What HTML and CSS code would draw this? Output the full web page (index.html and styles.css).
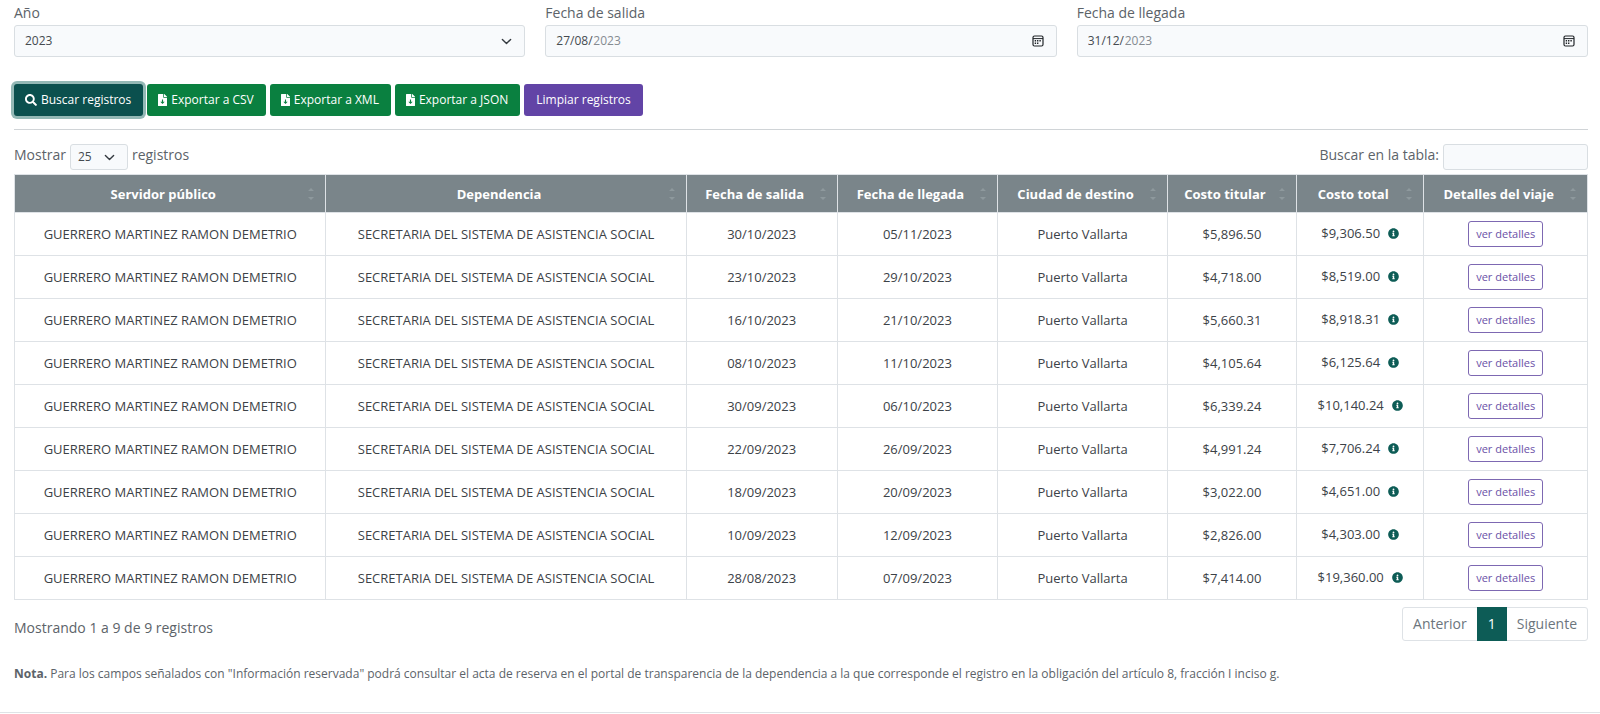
FILE: index.html
```html
<!DOCTYPE html>
<html lang="es">
<head>
<meta charset="utf-8">
<title>Registros de viajes</title>
<link rel="stylesheet" href="styles.css">
</head>
<body>
<svg class="sprite" aria-hidden="true">
  <symbol id="i-search" viewBox="0 0 512 512"><path fill="currentColor" d="M505 442.700L405.300 343c-4.500-4.500-10.600-7-17-7H372c27.600-35.300 44-79.700 44-128C416 93.100 322.900 0 208 0S0 93.100 0 208s93.100 208 208 208c48.300 0 92.700-16.400 128-44v16.300c0 6.400 2.500 12.500 7 17l99.700 99.700c9.400 9.400 24.600 9.400 33.900 0l28.300-28.300c9.400-9.400 9.400-24.600.1-34zM208 336c-70.700 0-128-57.200-128-128 0-70.700 57.200-128 128-128 70.700 0 128 57.200 128 128 0 70.700-57.200 128-128 128z"/></symbol>
  <symbol id="i-file" viewBox="0 0 384 512"><path fill="currentColor" fill-rule="evenodd" d="M224 136V0H24C10.700 0 0 10.700 0 24v464c0 13.300 10.700 24 24 24h336c13.300 0 24-10.700 24-24V160H248c-13.200 0-24-10.800-24-24zM168 230h48v100h70L192 430 98 330h70zM377 105L279.100 7c-4.500-4.500-10.600-7-17-7H256v128h128v-6.100c0-6.300-2.500-12.400-7-16.900z"/></symbol>
  <symbol id="i-info" viewBox="0 0 512 512"><path fill="currentColor" d="M256 8C119 8 8 119.100 8 256c0 137 111 248 248 248s248-111 248-248C504 119.100 393 8 256 8zm0 110c23.200 0 42 18.800 42 42s-18.800 42-42 42-42-18.800-42-42 18.800-42 42-42zm56 254c0 6.600-5.400 12-12 12h-88c-6.600 0-12-5.400-12-12v-24c0-6.600 5.400-12 12-12h12v-64h-12c-6.600 0-12-5.400-12-12v-24c0-6.600 5.400-12 12-12h64c6.600 0 12 5.400 12 12v100h12c6.600 0 12 5.400 12 12v24z"/></symbol>
  <symbol id="i-cal" viewBox="0 0 12 12"><rect x="1" y="1" width="10" height="10" rx="1.500" fill="none" stroke="currentColor" stroke-width="1.200"/><path d="M1 3.600h10" stroke="currentColor" stroke-width="1"/><path fill="currentColor" d="M5 5h1.400v1.400H5zM7.400 5h1.400v1.400H7.400zM2.700 5h1.400v1.400H2.700zM2.700 7.500h1.400v1.400H2.700zM5 7.500h1.400v1.400H5z"/></symbol>
  <symbol id="i-sort" viewBox="0 0 6 12"><path fill="currentColor" d="M3 0l3 3H0zM3 12l3-3H0z"/></symbol>
</svg>
<main class="card">
  <form class="filters">
    <div class="field">
      <label for="anio">Año</label>
      <select id="anio" class="control select"><option>2023</option></select>
    </div>
    <div class="field">
      <label for="salida">Fecha de salida</label>
      <div class="control date">
        <input id="salida" class="day" type="text" value="27/08/"><input class="year" type="text" value="2023" aria-label="Año de salida">
        <button type="button" class="cal" aria-label="Abrir calendario"><svg><use href="#i-cal"/></svg></button>
      </div>
    </div>
    <div class="field">
      <label for="llegada">Fecha de llegada</label>
      <div class="control date">
        <input id="llegada" class="day" type="text" value="31/12/"><input class="year" type="text" value="2023" aria-label="Año de llegada">
        <button type="button" class="cal" aria-label="Abrir calendario"><svg><use href="#i-cal"/></svg></button>
      </div>
    </div>
  </form>
  <div class="actions">
    <button class="btn search" type="button"><svg class="icon-search"><use href="#i-search"/></svg>Buscar registros</button>
    <button class="btn export" type="button"><svg class="icon-file"><use href="#i-file"/></svg>Exportar a CSV</button>
    <button class="btn export" type="button"><svg class="icon-file"><use href="#i-file"/></svg>Exportar a XML</button>
    <button class="btn export" type="button"><svg class="icon-file"><use href="#i-file"/></svg>Exportar a JSON</button>
    <button class="btn clear" type="button">Limpiar registros</button>
  </div>
  <div class="toolbar">
    <label class="length">Mostrar <select class="control small select"><option>25</option></select> registros</label>
    <label class="find">Buscar en la tabla: <input class="control small" type="search"></label>
  </div>
  <table class="records">
    <colgroup><col class="c-name"><col class="c-dep"><col class="c-out"><col class="c-in"><col class="c-city"><col class="c-cost"><col class="c-total"><col class="c-more"></colgroup>
    <thead>
      <tr>
        <th>Servidor público<svg class="sort"><use href="#i-sort"/></svg></th>
        <th>Dependencia<svg class="sort"><use href="#i-sort"/></svg></th>
        <th>Fecha de salida<svg class="sort"><use href="#i-sort"/></svg></th>
        <th>Fecha de llegada<svg class="sort"><use href="#i-sort"/></svg></th>
        <th>Ciudad de destino<svg class="sort"><use href="#i-sort"/></svg></th>
        <th>Costo titular<svg class="sort"><use href="#i-sort"/></svg></th>
        <th>Costo total<svg class="sort"><use href="#i-sort"/></svg></th>
        <th>Detalles del viaje<svg class="sort"><use href="#i-sort"/></svg></th>
      </tr>
    </thead>
    <tbody>
      <tr><td>GUERRERO MARTINEZ RAMON DEMETRIO</td><td>SECRETARIA DEL SISTEMA DE ASISTENCIA SOCIAL</td><td>30/10/2023</td><td>05/11/2023</td><td>Puerto Vallarta</td><td>$5,896.50</td><td class="total">$9,306.50<svg class="info"><use href="#i-info"/></svg></td><td><button class="more" type="button">ver detalles</button></td></tr>
      <tr><td>GUERRERO MARTINEZ RAMON DEMETRIO</td><td>SECRETARIA DEL SISTEMA DE ASISTENCIA SOCIAL</td><td>23/10/2023</td><td>29/10/2023</td><td>Puerto Vallarta</td><td>$4,718.00</td><td class="total">$8,519.00<svg class="info"><use href="#i-info"/></svg></td><td><button class="more" type="button">ver detalles</button></td></tr>
      <tr><td>GUERRERO MARTINEZ RAMON DEMETRIO</td><td>SECRETARIA DEL SISTEMA DE ASISTENCIA SOCIAL</td><td>16/10/2023</td><td>21/10/2023</td><td>Puerto Vallarta</td><td>$5,660.31</td><td class="total">$8,918.31<svg class="info"><use href="#i-info"/></svg></td><td><button class="more" type="button">ver detalles</button></td></tr>
      <tr><td>GUERRERO MARTINEZ RAMON DEMETRIO</td><td>SECRETARIA DEL SISTEMA DE ASISTENCIA SOCIAL</td><td>08/10/2023</td><td>11/10/2023</td><td>Puerto Vallarta</td><td>$4,105.64</td><td class="total">$6,125.64<svg class="info"><use href="#i-info"/></svg></td><td><button class="more" type="button">ver detalles</button></td></tr>
      <tr><td>GUERRERO MARTINEZ RAMON DEMETRIO</td><td>SECRETARIA DEL SISTEMA DE ASISTENCIA SOCIAL</td><td>30/09/2023</td><td>06/10/2023</td><td>Puerto Vallarta</td><td>$6,339.24</td><td class="total">$10,140.24<svg class="info"><use href="#i-info"/></svg></td><td><button class="more" type="button">ver detalles</button></td></tr>
      <tr><td>GUERRERO MARTINEZ RAMON DEMETRIO</td><td>SECRETARIA DEL SISTEMA DE ASISTENCIA SOCIAL</td><td>22/09/2023</td><td>26/09/2023</td><td>Puerto Vallarta</td><td>$4,991.24</td><td class="total">$7,706.24<svg class="info"><use href="#i-info"/></svg></td><td><button class="more" type="button">ver detalles</button></td></tr>
      <tr><td>GUERRERO MARTINEZ RAMON DEMETRIO</td><td>SECRETARIA DEL SISTEMA DE ASISTENCIA SOCIAL</td><td>18/09/2023</td><td>20/09/2023</td><td>Puerto Vallarta</td><td>$3,022.00</td><td class="total">$4,651.00<svg class="info"><use href="#i-info"/></svg></td><td><button class="more" type="button">ver detalles</button></td></tr>
      <tr><td>GUERRERO MARTINEZ RAMON DEMETRIO</td><td>SECRETARIA DEL SISTEMA DE ASISTENCIA SOCIAL</td><td>10/09/2023</td><td>12/09/2023</td><td>Puerto Vallarta</td><td>$2,826.00</td><td class="total">$4,303.00<svg class="info"><use href="#i-info"/></svg></td><td><button class="more" type="button">ver detalles</button></td></tr>
      <tr><td>GUERRERO MARTINEZ RAMON DEMETRIO</td><td>SECRETARIA DEL SISTEMA DE ASISTENCIA SOCIAL</td><td>28/08/2023</td><td>07/09/2023</td><td>Puerto Vallarta</td><td>$7,414.00</td><td class="total">$19,360.00<svg class="info"><use href="#i-info"/></svg></td><td><button class="more" type="button">ver detalles</button></td></tr>
    </tbody>
  </table>
  <div class="footer">
    <div class="summary">Mostrando 1 a 9 de 9 registros</div>
    <nav class="pages" aria-label="Paginación">
      <a href="#">Anterior</a><a href="#" class="active">1</a><a href="#">Siguiente</a>
    </nav>
  </div>
  <p class="note"><strong>Nota.</strong> Para los campos señalados con "Información reservada" podrá consultar el acta de reserva en el portal de transparencia de la dependencia a la que corresponde el registro en la obligación del artículo 8, fracción I inciso g.</p>
</main>
</body>
</html>
```
FILE: styles.css
```css
* { box-sizing: border-box; }
body {
  margin: 0;
  background: #fff;
  color: #5c6369;
  font: 14px/20px "Open Sans", "Noto Sans", sans-serif;
}
.sprite { display: none; }
button, input, select { font: inherit; color: inherit; margin: 0; }
.card {
  padding: 3px 12px 28px 14px;
  border-bottom: 1px solid #dfe3e6;
}

.filters { display: grid; grid-template-columns: repeat(3, 1fr); gap: 20px; }
.field label { display: block; height: 22px; }
.control {
  width: 100%;
  height: 32px;
  padding: 0 10px;
  border: 1px solid #d9dee2;
  border-radius: 3px;
  background-color: #f8fafc;
  color: #454b50;
  font-size: 12px;
  outline: none;
}
.select {
  appearance: none;
  background-image: url("data:image/svg+xml,%3Csvg xmlns='http://www.w3.org/2000/svg' viewBox='0 0 16 16'%3E%3Cpath fill='none' stroke='%23343a40' stroke-width='2' stroke-linecap='round' stroke-linejoin='round' d='M2 5l6 6 6-6'/%3E%3C/svg%3E");
  background-repeat: no-repeat;
  background-position: right 12px center;
  background-size: 11px 11px;
}
.date { display: flex; align-items: center; padding-right: 12px; }
.date input { border: 0; padding: 0; background: none; outline: none; }
.date .day { width: 37px; }
.date .year { flex: 1; min-width: 0; color: #858b91; }
.cal { display: flex; padding: 0; border: 0; background: none; color: #212529; }
.cal svg { width: 12px; height: 12px; }

.actions {
  display: flex;
  gap: 4px;
  padding: 27px 0 13px;
  border-bottom: 1px solid #d0d4d7;
}
.btn {
  display: flex;
  align-items: center;
  gap: 4px;
  height: 32px;
  padding: 0 11px;
  border: 0;
  border-radius: 3px;
  color: #fff;
  font-size: 12px;
}
.search { padding: 0 12px 0 11px; background: #0b504e; box-shadow: 0 0 0 3px #93b8b5; }
.export { padding: 0 12px 0 11px; background: #0a8040; }
.clear { padding: 0 12px; background: #6244a6; }
.icon-search { width: 12px; height: 12px; }
.icon-file { width: 9px; height: 12px; }

.toolbar { display: flex; justify-content: space-between; padding: 14px 0 4px; }
.toolbar label { display: flex; gap: 4px; line-height: 22px; }
.small { height: 26px; padding: 0 7px; }
.length .small { width: 58px; }
.find .small { width: 145px; }

.records { width: 100%; border-collapse: collapse; table-layout: fixed; }
.c-name { width: 19.8%; }
.c-dep { width: 22.9%; }
.c-out { width: 9.6%; }
.c-in { width: 10.2%; }
.c-city { width: 10.8%; }
.c-cost { width: 8.2%; }
.c-total { width: 8.1%; }
.c-more { width: 10.4%; }
.records th, .records td {
  border: 1px solid #dee2e6;
  text-align: center;
  white-space: nowrap;
}
.records th {
  position: relative;
  height: 38px;
  padding: 0 22px 0 8px;
  background: #7a858a;
  color: #fff;
  font-size: 13px;
  font-weight: 700;
}
.sort {
  position: absolute;
  right: 11px;
  top: 13px;
  width: 6px;
  height: 12px;
  color: #8e999d;
}
.records td { height: 43px; padding: 0 8px; color: #3c4247; font-size: 13px; }
.records .total { padding-bottom: 2px; }
.info { width: 11px; height: 11px; margin-left: 8px; vertical-align: -1px; color: #0d5c56; }
.more {
  height: 26px;
  padding: 0 7px;
  border: 1px solid #7d68b2;
  border-radius: 3px;
  background: #fff;
  color: #6a50a7;
  font-size: 11px;
}

.footer { display: flex; justify-content: space-between; padding-top: 7px; }
.summary { padding-top: 11px; }
.pages { display: flex; border: 1px solid #dee2e6; border-radius: 3px; }
.pages a { padding: 6px 10px; color: #6c757d; text-decoration: none; }
.pages .active { margin: -1px 0; padding: 7px 11px; background: #0d5c56; color: #fff; }
.note { margin: 23px 0 0; font-size: 12px; }
```
